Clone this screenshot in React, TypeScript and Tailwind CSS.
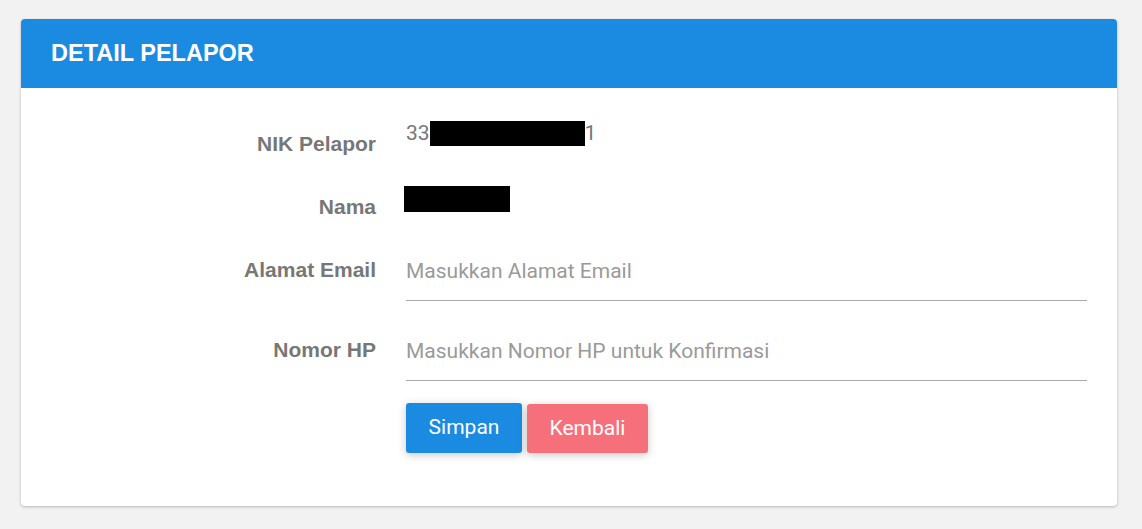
export default function App() {
  return (
    <div className="min-h-screen bg-[#f2f2f2] pt-[19px] pl-[21px]">
      <div className="w-[1096px] overflow-hidden rounded-[4px] bg-white shadow-[0_1px_3px_rgba(0,0,0,0.25)]">
        <div className="flex h-[69px] items-center bg-[#1b8be2] px-[30px]">
          <h1 className="font-['Liberation_Sans',Arial,sans-serif] text-[23.5px] font-bold text-white">
            DETAIL PELAPOR
          </h1>
        </div>

        <div className="pt-[33px] pb-[53px] pr-[30px] font-['Roboto',sans-serif]">
          <div className="flex h-[65px] gap-[30px]">
            <Label className="pt-[11px]">NIK Pelapor</Label>
            <div className="flex h-6 flex-1 items-center text-[21px] leading-6 text-[#777]">
              <span>33</span>
              <span className="inline-block h-[25px] w-[155px] bg-black" />
              <span>1</span>
            </div>
          </div>

          <div className="flex h-[65px] gap-[30px]">
            <Label className="pt-[9px]">Nama</Label>
            <div className="flex-1">
              <span className="-ml-[2px] block h-[26px] w-[106px] bg-black" />
            </div>
          </div>

          <div className="flex gap-[30px]">
            <Label className="pt-[7px]">Alamat Email</Label>
            <input
              type="email"
              placeholder="Masukkan Alamat Email"
              className="flex-1 border-b border-[#aaa] bg-transparent pt-2 pb-[17px] text-[21px] leading-6 text-[#555] outline-none placeholder:text-[#9a9a9a]"
            />
          </div>

          <div className="mt-[30px] flex gap-[30px]">
            <Label className="pt-[7px]">Nomor HP</Label>
            <input
              type="text"
              placeholder="Masukkan Nomor HP untuk Konfirmasi"
              className="flex-1 border-b border-[#aaa] bg-transparent pt-2 pb-[17px] text-[21px] leading-6 text-[#555] outline-none placeholder:text-[#9a9a9a]"
            />
          </div>

          <div className="mt-[22px] flex items-start gap-[30px]">
            <div className="w-[355px] shrink-0" />
            <div className="flex items-start gap-[5px]">
              <button
                type="button"
                className="h-[50px] w-[116px] rounded-[3px] bg-[#1b8be2] text-[21px] text-white shadow-[0_2px_8px_rgba(0,0,0,0.22)]"
              >
                Simpan
              </button>
              <button
                type="button"
                className="mt-px h-[49px] w-[121px] rounded-[3px] bg-[#f6707b] text-[21px] text-white shadow-[0_2px_8px_rgba(0,0,0,0.22)]"
              >
                Kembali
              </button>
            </div>
          </div>
        </div>
      </div>
    </div>
  );
}

function Label({ children, className }: { children: React.ReactNode; className?: string }) {
  return (
    <div
      className={`w-[355px] shrink-0 text-right font-['Liberation_Sans',Arial,sans-serif] text-[21px] leading-6 font-bold text-[#777] ${className ?? ""}`}
    >
      {children}
    </div>
  );
}
